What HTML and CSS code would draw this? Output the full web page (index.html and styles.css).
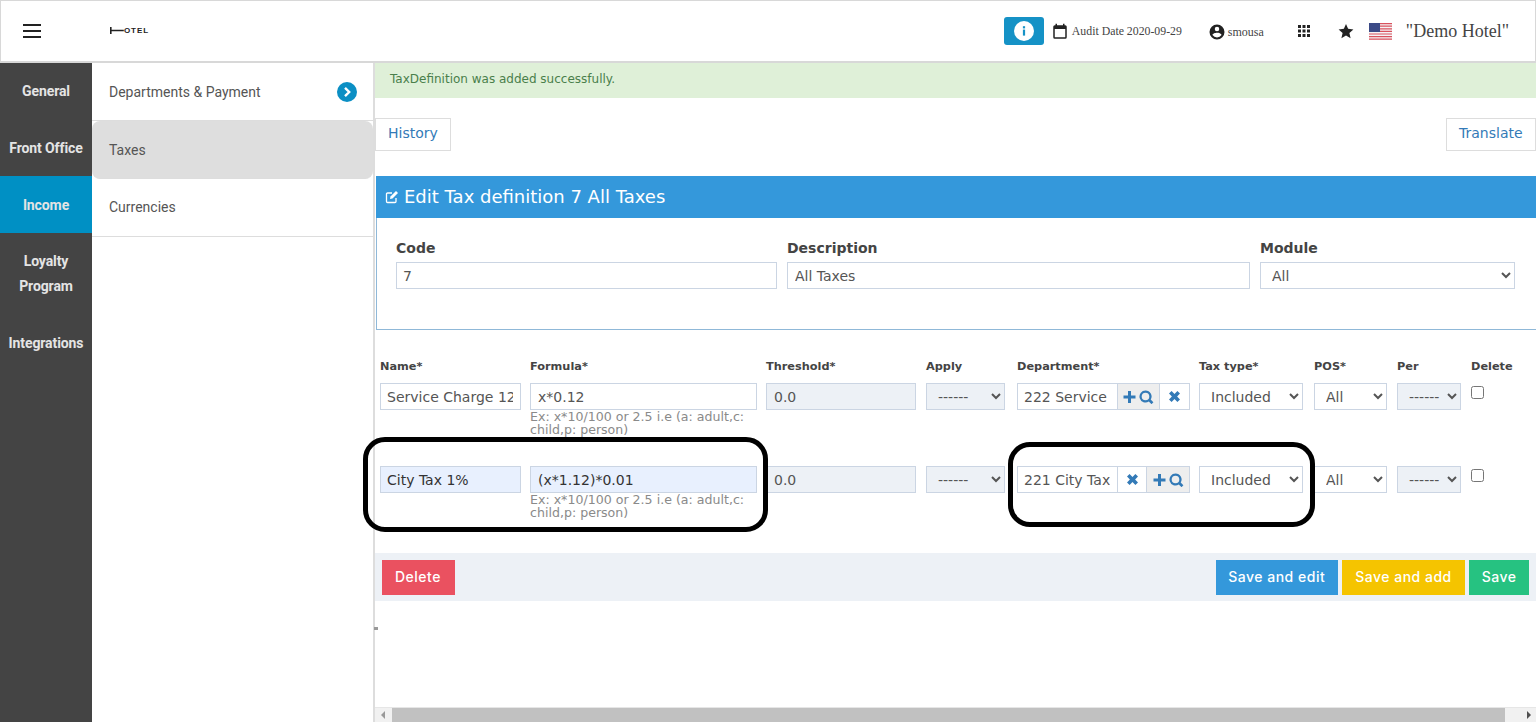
FILE: index.html
```html
<!DOCTYPE html>
<html lang="en">
<head>
    <meta charset="UTF-8">
    <title>Edit Tax definition</title>
    <link rel="stylesheet" href="styles.css">
</head>
<body>
<div class="topBar">
    <a class="burger" href="#"><span></span><span></span><span></span></a>
    <a class="logo" href="#">
        <svg width="14" height="9" viewBox="0 0 14 9"><path d="M.8 1v7M.8 4.500h13" stroke="#222" stroke-width="1.600" fill="none"/></svg><span>OTEL</span>
    </a>
    <div class="topRight">
        <a class="infoBtn" href="#"><svg width="20" height="20" viewBox="0 0 20 20"><circle cx="10" cy="10" r="10" fill="#fff"/><rect x="8.900" y="8.600" width="2.200" height="6" fill="#1592c6"/><rect x="8.900" y="5.200" width="2.200" height="2.200" fill="#1592c6"/></svg></a>
        <svg class="calIcon" width="18" height="18" viewBox="0 0 24 24"><path fill="#222" d="M19 3h-1V1h-2v2H8V1H6v2H5a2 2 0 0 0-2 2v14a2 2 0 0 0 2 2h14a2 2 0 0 0 2-2V5a2 2 0 0 0-2-2zm0 16H5V8h14v11z"/></svg>
        <span class="auditText">Audit Date 2020-09-29</span>
        <svg class="userIcon" width="18" height="18" viewBox="0 0 24 24"><path fill="#222" d="M12 2a10 10 0 1 0 0 20 10 10 0 0 0 0-20zm0 3a3 3 0 1 1 0 6 3 3 0 0 1 0-6zm0 14.200a7.200 7.200 0 0 1-6-3.200c0-2 4-3.100 6-3.100s6 1.100 6 3.100a7.200 7.200 0 0 1-6 3.200z"/></svg>
        <span class="userText">smousa</span>
        <svg class="appsIcon" width="12" height="12" viewBox="0 0 12 12"><path fill="#222" d="M0 0h3v3H0zM4.500 0h3v3h-3zM9 0h3v3H9zM0 4.500h3v3H0zM4.500 4.500h3v3h-3zM9 4.500h3v3H9zM0 9h3v3H0zM4.500 9h3v3h-3zM9 9h3v3H9z"/></svg>
        <svg class="starIcon" width="16" height="16" viewBox="0 0 24 24"><path fill="#222" d="M12 1.500l3.200 7.300 7.900.8-6 5.300 1.800 7.800L12 18.600l-6.900 4.100 1.800-7.800-6-5.300 7.900-.8z"/></svg>
        <svg class="flag" width="23" height="17" viewBox="0 0 23 17">
            <rect width="23" height="17" fill="#f4f4f6"/>
            <path d="M0 .6h23M0 3.200h23M0 5.800h23M0 8.400h23M0 11h23M0 13.600h23M0 16.200h23" stroke="#d9525e" stroke-width="1.200"/>
            <rect width="11" height="9" fill="#3b4a86"/>
        </svg>
        <span class="hotelName">"Demo Hotel"</span>
    </div>
</div>

<div class="page">
    <ul class="sideMenu">
        <li>General</li>
        <li>Front Office</li>
        <li class="active">Income</li>
        <li class="tall">Loyalty Program</li>
        <li>Integrations</li>
    </ul>
    <ul class="subMenu">
        <li>Departments &amp; Payment
            <svg width="20" height="20" viewBox="0 0 20 20"><circle cx="10" cy="10" r="10" fill="#0b8fc4"/><path d="M8 5.800l4.200 4.200L8 14.200" stroke="#fff" stroke-width="2.400" fill="none"/></svg>
        </li>
        <li class="current">Taxes</li>
        <li>Currencies</li>
    </ul>

    <div class="main">
        <div class="alertOk">TaxDefinition was added successfully.</div>
        <div class="toolRow">
            <a class="lightBtn" href="#">History</a>
            <a class="lightBtn" href="#">Translate</a>
        </div>

        <div class="panel">
            <h2 class="panelHead">
                <svg width="14" height="14" viewBox="0 0 14 14"><path d="M11 8v3.500a1 1 0 0 1-1 1H2.500a1 1 0 0 1-1-1V4a1 1 0 0 1 1-1H7" stroke="#fff" stroke-width="1.300" fill="none"/><path d="M5.500 6.500L11 1l2 2-5.500 5.500-2.500.5z" fill="#fff"/></svg>
                Edit Tax definition 7 All Taxes
            </h2>
            <div class="panelBody">
                <div class="field codeField"><label>Code</label><input class="tight" type="text" value="7"></div>
                <div class="field descField"><label>Description</label><input type="text" value="All Taxes"></div>
                <div class="field moduleField"><label>Module</label><select><option>All</option></select></div>
            </div>
        </div>

        <div class="taxGrid">
            <b>Name*</b><b>Formula*</b><b>Threshold*</b><b>Apply</b><b>Department*</b><b>Tax type*</b><b>POS*</b><b>Per</b><b>Delete</b>

            <div><input class="tight" type="text" value="Service Charge 12%"></div>
            <div><input type="text" value="x*0.12"><p class="hint">Ex: x*10/100 or 2.5 i.e (a: adult,c: child,p: person)</p></div>
            <div class="trim1"><input class="ro" type="text" value="0.0" readonly></div>
            <div class="trim3"><select class="ro"><option>------</option></select></div>
            <div class="deptGroup">
                <input class="tight" type="text" value="222 Service">
                <a class="addon grey wide" href="#"><svg width="31" height="14" viewBox="0 0 30 14"><use href="#plusSearch"/></svg></a>
                <a class="addon" href="#"><svg width="11" height="11" viewBox="0 0 11 11"><use href="#timesIcon"/></svg></a>
            </div>
            <div class="trim2"><select><option>Included</option></select></div>
            <div class="trim1"><select><option>All</option></select></div>
            <div class="trim1"><select class="ro"><option>------</option></select></div>
            <div><input class="delCheck" type="checkbox"></div>

            <div><input class="hl tight" type="text" value="City Tax 1%"></div>
            <div><input class="hl" type="text" value="(x*1.12)*0.01"><p class="hint">Ex: x*10/100 or 2.5 i.e (a: adult,c: child,p: person)</p></div>
            <div class="trim1"><input class="ro" type="text" value="0.0" readonly></div>
            <div class="trim3"><select class="ro"><option>------</option></select></div>
            <div class="deptGroup">
                <input class="tight" type="text" value="221 City Tax">
                <a class="addon narrow" href="#"><svg width="11" height="11" viewBox="0 0 11 11"><use href="#timesIcon"/></svg></a>
                <a class="addon grey wide2" href="#"><svg width="31" height="14" viewBox="0 0 30 14"><use href="#plusSearch"/></svg></a>
            </div>
            <div class="trim2"><select><option>Included</option></select></div>
            <div class="trim1"><select><option>All</option></select></div>
            <div class="trim1"><select class="ro"><option>------</option></select></div>
            <div><input class="delCheck" type="checkbox"></div>
        </div>

        <div class="actionBar">
            <a class="btn red" href="#">Delete</a>
            <span class="spacer"></span>
            <a class="btn blue" href="#">Save and edit</a>
            <a class="btn yellow" href="#">Save and add</a>
            <a class="btn green" href="#">Save</a>
        </div>

        <div class="hScroll">
            <span class="arrowL"></span>
            <span class="thumb"></span>
            <span class="arrowR"></span>
        </div>

        <!-- the black frames drawn over the screenshot -->
        <i class="mark markA"></i>
        <i class="mark markB"></i>
        <i class="tick"></i>
    </div>
</div>

<svg width="0" height="0" class="defs">
    <defs>
        <g id="plusSearch" fill="#337ab7">
            <path d="M4.500 1h3v4.500H12v3H7.500V13h-3V8.500H0v-3h4.500z"/>
            <path d="M22 .5a6 6 0 1 0 3.300 11l2.700 2.700 1.900-1.900-2.700-2.700A6 6 0 0 0 22 .5zm0 2.200a3.800 3.800 0 1 1 0 7.600 3.800 3.800 0 0 1 0-7.600z"/>
        </g>
        <path id="timesIcon" fill="#337ab7" d="M2.600 0l2.900 2.900L8.400 0 11 2.600 8.100 5.500 11 8.400 8.400 11 5.500 8.100 2.600 11 0 8.400l2.900-2.900L0 2.600z"/>
    </defs>
</svg>
</body>
</html>
```

FILE: styles.css
```css
*{margin: 0;padding: 0;box-sizing: border-box}
ul{list-style: none}
a{text-decoration: none}
html,body{height: 100%;overflow: hidden}
body{background: #fff;font-family: "DejaVu Sans",sans-serif;color: #555}
.defs{position: absolute}

/* top bar */
.topBar{height: 63px;display: flex;align-items: center;border: 1px solid #d8d8d8;border-bottom-width: 2px;background: #fff}
.burger{width: 18px;margin-left: 22px;display: block}
.burger span{display: block;height: 2px;background: #222;margin-bottom: 4px}
.burger span:last-child{margin-bottom: 0}
.logo{display: flex;align-items: center;margin-left: 69px;margin-top: -2px;color: #222;font: 700 8px/9px "Liberation Sans",sans-serif;letter-spacing: .9px}
.topRight{margin-left: auto;display: flex;align-items: center;font-family: "Liberation Serif",serif;color: #444;margin-top: -1px}
.infoBtn{width: 40px;height: 28px;background: #1592c6;border-radius: 3px;display: flex;align-items: center;justify-content: center}
.calIcon{margin: 2px 0 0 7px}
.auditText{font-size: 11.800px;margin: 1px 0 0 3px;width: 110px;white-space: nowrap}
.userIcon{margin: 2px 0 0 26px}
.userText{font-size: 12px;margin: 3px 0 0 2px}
.appsIcon{margin-left: 34px}
.starIcon{margin-left: 28px}
.flag{margin: 2px 0 0 15px}
.hotelName{font-size: 18px;margin: 1px 26px 0 14px;white-space: nowrap}

.page{display: flex;height: 659px}

/* dark menu */
.sideMenu{width: 92px;background: #444;flex: none;color: #e4e4e4;font: 700 14px/25px Roboto,sans-serif;text-align: center}
.sideMenu li{height: 57px;display: flex;align-items: center;justify-content: center;letter-spacing: -.1px;padding-top: 2px}
.sideMenu li:first-child{height: 56px;padding-top: 0}
.sideMenu li:last-child{padding-top: 0}
.sideMenu .active{background: #0090c4}
.sideMenu .tall{height: 82px;padding: 0 12px}

/* sub menu */
.subMenu{width: 283px;flex: none;border-right: 2px solid #ddd;font: 14px Roboto,sans-serif;color: #555}
.subMenu li{height: 58px;display: flex;align-items: center;justify-content: space-between;padding: 0 16px 0 17px;border-bottom: 1px solid #ddd}
.subMenu li:last-child{padding-bottom: 2px}
.subMenu .current{background: #dedede;border-radius: 8px}

/* content */
.main{flex: 1;position: relative;display: flex;flex-direction: column;min-width: 0}
.alertOk{height: 35px;background: #dff0d8;color: #4a7f4b;font-size: 12px;line-height: 33px;padding-left: 15px}
.toolRow{display: flex;justify-content: space-between;margin-top: 20px}
.lightBtn{height: 33px;line-height: 29px;padding: 0 12px;border: 1px solid #ddd;font-size: 14px;color: #337ab7}
.lightBtn:last-child{padding: 0 0 0 12px;width: 90px}

.panel{margin: 25px 0 0 1px}
.panelHead{height: 42px;background: #3498db;color: #fff;font-size: 18px;font-weight: 400;line-height: 40px;padding-left: 9px;display: flex;align-items: center;gap: 5px}
.panelBody{height: 112px;border: 1px solid #8fb8d8;border-width: 0 0 1px 1px;display: flex;padding: 21px 21px 0 19px;gap: 10px}
.field label{display: block;font-size: 14px;font-weight: 700;color: #444;height: 23px;line-height: 19px}
.codeField{width: 381px}
.descField{width: 463px}
.moduleField{width: 255px}

input[type=text],select{width: 100%;height: 27px;border: 1px solid #cbd5e3;background: #fff;font: 14px "DejaVu Sans",sans-serif;color: #555;padding: 0 7px;border-radius: 0;display: block}
select{padding: 0 3px 0 7px}
input[type=text].tight{padding: 0 7px 0 6px}
.ro,input[type=text].ro{background: #edf1f6}
input[type=text].hl{background: #e8f0fe;color: #333}

/* tax rows */
.taxGrid{display: grid;grid-template-columns: 141px 227px 151px 82px 173px 106px 74px 65px 1fr;grid-template-rows: 29px 83px 87px;column-gap: 9px;padding-left: 5px;margin-top: 24px}
.taxGrid b{font-size: 11.300px;color: #444;line-height: 26px;white-space: nowrap}
.trim1{padding-right: 1px}
.trim2{padding-right: 2px}
.trim3{padding-right: 3px}
.hint{font-size: 12.600px;line-height: 13px;color: #8a8a8a}
.deptGroup{display: flex}
.deptGroup input[type=text]{width: 101px;flex: none}
.addon{height: 27px;border: 1px solid #cbd5e3;border-left: 0;display: flex;align-items: center;justify-content: center;width: 30px;flex: none}
.addon.narrow{width: 29px}
.addon.grey{background: #eee}
.addon.wide{width: 42px}
.addon.wide2{width: 43px}
.delCheck{width: 13px;height: 13px;margin-top: 3px;display: block}

.actionBar{height: 48px;background: #edf1f6;display: flex;align-items: center;padding: 0 7px;gap: 4px}
.spacer{flex: 1}
.btn{height: 35px;color: #fff;font: 500 14px/32px Inter,sans-serif;padding: 0 11.500px;border: 1px solid transparent;letter-spacing: .5px;white-space: nowrap}
.red{background: #ea5160;width: 73px;padding: 0 12px}
.blue{background: #3498db}
.yellow{background: #f5c400;padding: 0 12.500px}
.green{background: #26c281}

.hScroll{margin-top: auto;height: 15px;background: #f1f1f1;display: flex;align-items: center;border-top: 1px solid #e6e6e6}
.thumb{height: 14px;width: 1113px;background: #c1c1c1;margin-left: 7px}
.arrowL{width: 0;height: 0;margin-left: 6px;border: 4px solid transparent;border-left: 0;border-right: 4px solid #999}
.arrowR{width: 0;height: 0;margin-left: 22px;border: 4px solid transparent;border-right: 0;border-left: 4px solid #505050}

/* annotations on top of the page */
.mark{position: absolute;border: 5px solid #000;border-radius: 22px}
.markA{left: -12px;top: 374px;width: 405px;height: 95px}
.markB{left: 633px;top: 379px;width: 307px;height: 85px}
.tick{position: absolute;left: -1px;top: 564px;width: 4px;height: 3px;background: #999}
```
